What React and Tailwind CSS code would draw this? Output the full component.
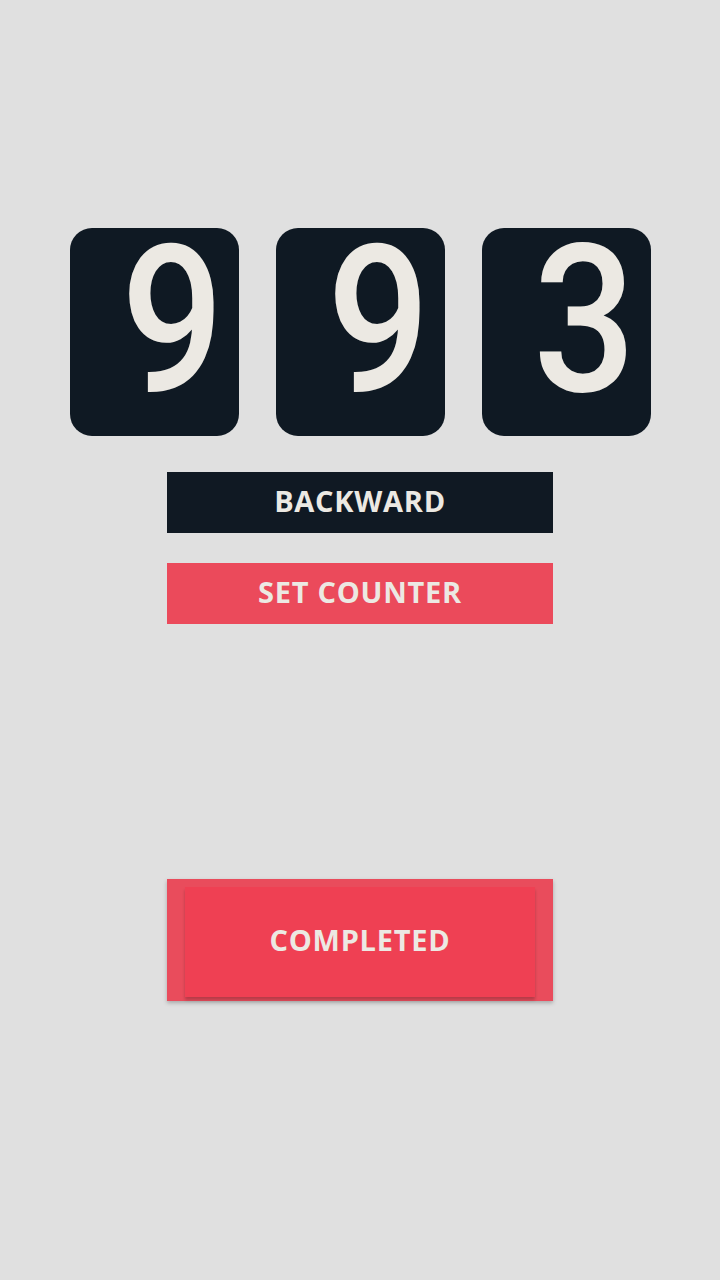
import React from 'react';

const digits = ['9', '9', '3'];

const textFont = { fontFamily: '"Open Sans", "Liberation Sans", sans-serif' };
const digitFont = { fontFamily: 'Roboto, "Liberation Sans", sans-serif' };

function DigitCard({ value }) {
  return (
    <div className="w-[169px] h-[208px] rounded-[22px] bg-[#0f1923] flex items-center justify-end pr-[14px] pb-[22px]">
      <span
        style={digitFont}
        className="block text-[206px] leading-[160px] font-medium text-[#ece9e3] scale-x-[0.88] origin-right"
      >
        {value}
      </span>
    </div>
  );
}

export default function App() {
  return (
    <div className="min-h-[1280px] w-full bg-[#e0e0e0] flex flex-col items-center pt-[228px]" style={textFont}>
      <div className="flex gap-[37px]">
        {digits.map((d, i) => (
          <DigitCard key={i} value={d} />
        ))}
      </div>

      <button className="mt-[36px] w-[386px] h-[61px] bg-[#101923] text-[#ece9e3] text-[29px] font-bold tracking-wide pb-[3px]">
        BACKWARD
      </button>
      <button className="mt-[30px] w-[386px] h-[61px] bg-[#eb4a5b] text-[#ece9e3] text-[29px] font-bold tracking-wide pb-[3px]">
        SET COUNTER
      </button>

      <div className="mt-[255px] w-[386px] h-[122px] bg-[#e94c5c] pt-[8px] px-[18px] pb-[4px] shadow-[0_2px_4px_rgba(0,0,0,0.25)]">
        <button className="w-full h-[110px] bg-[#ef4053] text-[#ece9e3] text-[29px] font-bold tracking-wide pb-[4px] shadow-[0_3px_3px_rgba(0,0,0,0.22)]">
          COMPLETED
        </button>
      </div>
    </div>
  );
}
